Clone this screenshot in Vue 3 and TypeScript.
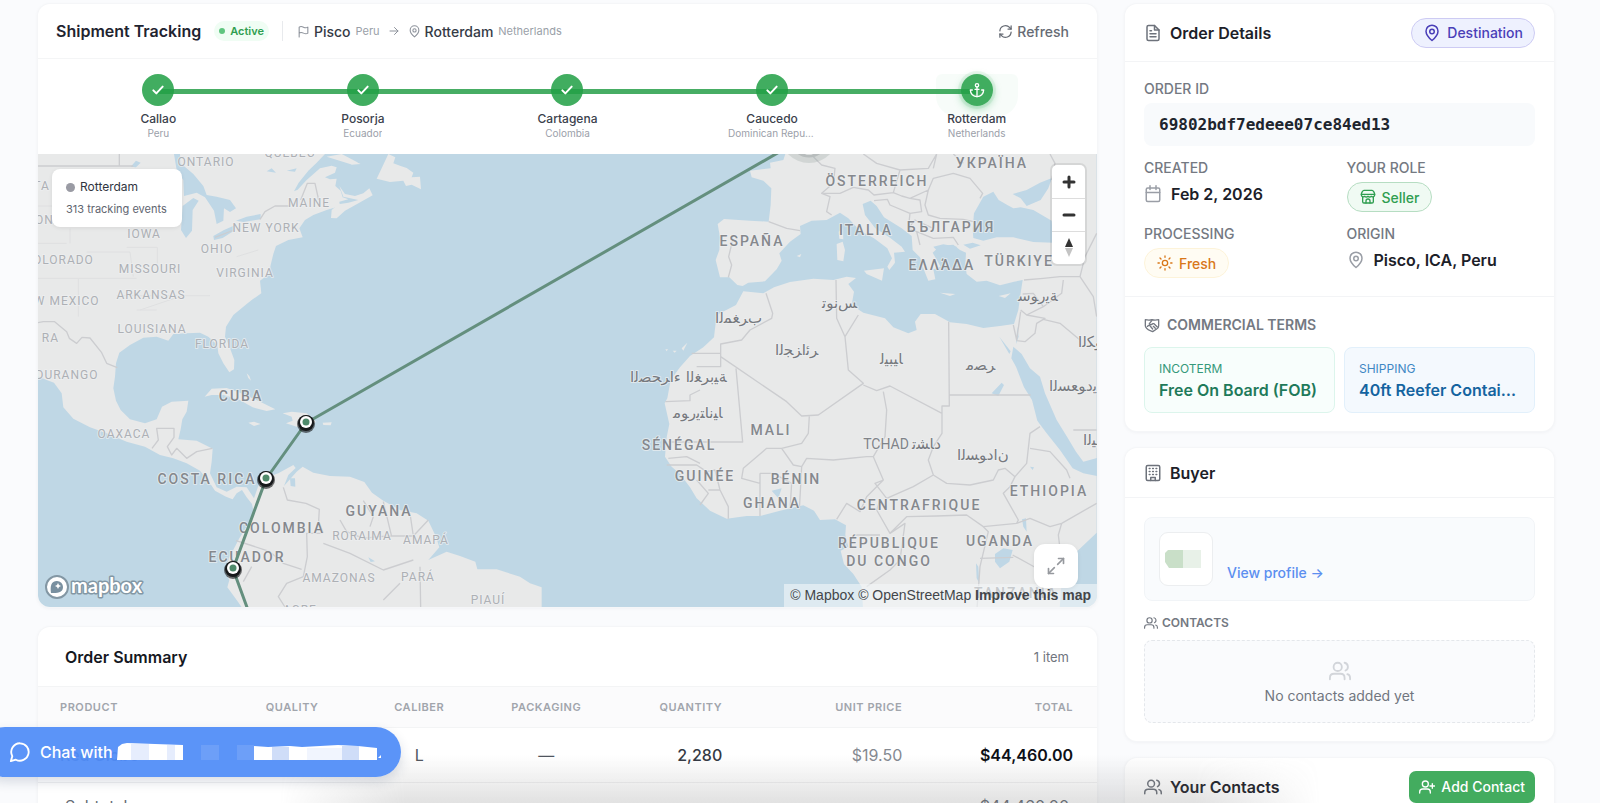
<script setup lang="ts">
import { h, type FunctionalComponent } from 'vue'

const icons: Record<string, string[]> = {
  flag: ['M4 22V4c2-1.500 5-1.500 8 0s6 1.500 8 0v11c-2 1.500-5 1.500-8 0s-6-1.500-8 0'],
  pin: ['M12 22s-8-7-8-12.500a8 8 0 0 1 16 0C20 15 12 22 12 22z', 'M15 10a3 3 0 1 1-6 0 3 3 0 0 1 6 0z'],
  arrow: ['M4 12h16', 'M13 5l7 7-7 7'],
  refresh: ['M3 11a9 9 0 0 1 15.500-5.500L21 8', 'M21 3v5h-5', 'M21 13a9 9 0 0 1-15.500 5.500L3 16', 'M3 21v-5h5'],
  check: ['M5 12.500l4.500 4.500L19 7'],
  anchor: ['M14.500 5a2.500 2.500 0 1 1-5 0 2.500 2.500 0 0 1 5 0z', 'M12 7.500V22', 'M5 12H2a10 10 0 0 0 20 0h-3', 'M9 11h6'],
  file: ['M14 2H6a2 2 0 0 0-2 2v16a2 2 0 0 0 2 2h12a2 2 0 0 0 2-2V8z', 'M14 2v6h6', 'M8 9h2', 'M8 13h8', 'M8 17h8'],
  calendar: ['M5 4h14a2 2 0 0 1 2 2v14a2 2 0 0 1-2 2H5a2 2 0 0 1-2-2V6a2 2 0 0 1 2-2z', 'M3 10h18', 'M8 1v5', 'M16 1v5'],
  store: ['M6 2h12c2 0 4 4 4 6H2c0-2 2-6 4-6z', 'M2 8v1a3 3 0 0 0 5 2 3.500 3.500 0 0 0 5 0 3.500 3.500 0 0 0 5 0 3 3 0 0 0 5-2V8', 'M4 12v7a2 2 0 0 0 2 2h12a2 2 0 0 0 2-2v-7', 'M9 21v-3a3 3 0 0 1 6 0v3'],
  sun: ['M16 12a4 4 0 1 1-8 0 4 4 0 0 1 8 0z', 'M12 1.500v2', 'M12 20.500v2', 'M1.500 12h2', 'M20.500 12h2', 'M4.500 4.500L6 6', 'M18 18l1.500 1.500', 'M4.500 19.500L6 18', 'M18 6l1.500-1.500'],
  deal: ['M2 4c4 1 7 1 10 0 3 1 6 1 10 0v9c0 2-1 4-3 5l-6 4c-2-1-7-2-9-5-1-1-2-3-2-4z', 'M12 5l-4 5c1 2 3 2 5 0h2l5 5', 'M5 14l3-2 5 6', 'M14 14l3 3'],
  building: ['M5 2h14a2 2 0 0 1 2 2v16a2 2 0 0 1-2 2H5a2 2 0 0 1-2-2V4a2 2 0 0 1 2-2z', 'M9 22v-4h6v4', 'M7 6h1', 'M11.500 6h1', 'M16 6h1', 'M7 10h1', 'M11.500 10h1', 'M16 10h1', 'M7 14h1', 'M11.500 14h1', 'M16 14h1'],
  users: ['M14 7.500a4.500 4.500 0 1 1-9 0 4.500 4.500 0 0 1 9 0z', 'M1 21v-1.500c0-3 2-4.500 4.500-4.500h7c2.500 0 4.500 1.500 4.500 4.500V21', 'M17 3a4.500 4.500 0 0 1 1 8.500', 'M20 15.500c2 .5 3 2 3 4V21'],
  userPlus: ['M14 7.500a4.500 4.500 0 1 1-9 0 4.500 4.500 0 0 1 9 0z', 'M1 21v-1.500c0-3 2-4.500 4.500-4.500h7c2.500 0 4.500 1.500 4.500 4.500V21', 'M20 7v7', 'M16.500 10.500h7'],
  expand: ['M14 10l7-7', 'M15 3h6v6', 'M10 14l-7 7', 'M3 15v6h6'],
  chat: ['M12 2.500a9.500 9.500 0 1 1-4.500 17.900L2 22l1.600-5.500A9.500 9.500 0 0 1 12 2.500z'],
}

const Icon: FunctionalComponent<{ name: string; size: number; stroke?: number }> = (p) =>
  h(
    'svg',
    {
      width: p.size, height: p.size, viewBox: '0 0 24 24', fill: 'none', stroke: 'currentColor',
      'stroke-width': p.stroke ?? 2, 'stroke-linecap': 'round', 'stroke-linejoin': 'round', 'aria-hidden': 'true',
    },
    (icons[p.name] ?? []).map((d) => h('path', { d })),
  )
Icon.props = ['name', 'size', 'stroke']

interface Stop { port: string; country: string; current?: boolean }
const stops: Stop[] = [
  { port: 'Callao', country: 'Peru' },
  { port: 'Posorja', country: 'Ecuador' },
  { port: 'Cartagena', country: 'Colombia' },
  { port: 'Caucedo', country: 'Dominican Republic' },
  { port: 'Rotterdam', country: 'Netherlands', current: true },
]

interface Label { t: string; x: number; y: number }
const regions: Label[] = [
  { t: 'ONTARIO', x: 206, y: 166 }, { t: 'QUEBEC', x: 290, y: 157 }, { t: 'MAINE', x: 309, y: 207 },
  { t: 'NEW YORK', x: 266, y: 232 }, { t: 'IOWA', x: 144, y: 238 }, { t: 'OHIO', x: 217, y: 253 },
  { t: 'MISSOURI', x: 150, y: 273 }, { t: 'VIRGINIA', x: 245, y: 277 }, { t: 'ARKANSAS', x: 151, y: 299 },
  { t: 'LOUISIANA', x: 152, y: 333 }, { t: 'FLORIDA', x: 222, y: 348 }, { t: 'COLORADO', x: 59, y: 264 },
  { t: 'NEW MEXICO', x: 58, y: 305 }, { t: 'DAKOTA', x: 24, y: 190 }, { t: 'OREGON', x: 27, y: 224 },
  { t: 'CHIHUAHUA RA', x: 10, y: 342 }, { t: 'DURANGO', x: 67, y: 379 }, { t: 'OAXACA', x: 124, y: 438 },
  { t: 'RORAIMA', x: 362, y: 540 }, { t: 'AMAPÁ', x: 426, y: 544 }, { t: 'AMAZONAS', x: 339, y: 582 },
  { t: 'PARÁ', x: 418, y: 581 }, { t: 'PIAUÍ', x: 488, y: 604 }, { t: 'ACRE', x: 300, y: 614 },
]
const countries: Label[] = [
  { t: 'CUBA', x: 241, y: 401 }, { t: 'COSTA RICA', x: 207, y: 484 }, { t: 'GUYANA', x: 379, y: 516 },
  { t: 'COLOMBIA', x: 282, y: 533 }, { t: 'ECUADOR', x: 247, y: 562 }, { t: 'УКРАЇНА', x: 992, y: 168 },
  { t: 'ÖSTERREICH', x: 877, y: 186 }, { t: 'ESPAÑA', x: 752, y: 246 }, { t: 'ITALIA', x: 866, y: 235 },
  { t: 'БЪЛГАРИЯ', x: 951, y: 232 }, { t: 'ΕΛΛΆΔΑ', x: 942, y: 270 }, { t: 'TÜRKIYE', x: 1019, y: 266 },
  { t: 'MALI', x: 771, y: 435 }, { t: 'SÉNÉGAL', x: 679, y: 450 }, { t: 'GUINÉE', x: 705, y: 481 },
  { t: 'BÉNIN', x: 796, y: 484 }, { t: 'GHANA', x: 772, y: 508 }, { t: 'CENTRAFRIQUE', x: 919, y: 510 },
  { t: 'ETHIOPIA', x: 1049, y: 496 }, { t: 'RÉPUBLIQUE', x: 889, y: 548 }, { t: 'DU CONGO', x: 889, y: 566 },
  { t: 'UGANDA', x: 1000, y: 546 }, { t: 'TANZANIA', x: 1016, y: 598 },
]
// Tile labels are laid out left to right from pre-shaped glyphs.
const arabic: Label[] = [
  { t: 'ﺗﻮﻧﺲ', x: 822, y: 308 }, { t: 'ﺳﻮﺭﻳﺔ', x: 1018, y: 301 }, { t: 'ﺍﻟﻤﻐﺮﺏ', x: 715, y: 323 },
  { t: 'ﺍﻟﺠﺰﺍﺋﺮ', x: 775, y: 355 }, { t: 'ﻟﻴﺒﻴﺎ', x: 880, y: 364 }, { t: 'ﻣﺼﺮ', x: 966, y: 370 },
  { t: 'ﺍﻟﺼﺤﺮﺍﺀ ﺍﻟﻐﺮﺑﻴﺔ', x: 630, y: 382 }, { t: 'ﻣﻮﺭﻳﺘﺎﻧﻴﺎ', x: 673, y: 418 }, { t: 'ﺍﻟﺴﻮﺩﺍﻥ', x: 957, y: 460 },
  { t: 'ﺍﻟﺴﻌﻮﺩﻳﺔ', x: 1049, y: 391 }, { t: 'ﺍﻟﻜﻮﻳﺖ', x: 1078, y: 347 }, { t: 'ﺍﻟﻴﻤﻦ', x: 1083, y: 445 },
  { t: 'ﺗﺸﺎﺩ', x: 912, y: 449 },
]
const pins = [{ x: 306, y: 423 }, { x: 266, y: 479 }, { x: 233, y: 569 }]
</script>

<template>
  <div class="page">
    <main class="layout">
      <div class="col main-col">
        <section class="card tracking">
          <header class="track-head">
            <h2>Shipment Tracking</h2>
            <span class="active"><i></i>Active</span>
            <span class="sep"></span>
            <div class="route">
              <Icon name="flag" :size="13" :stroke="2" /><b>Pisco</b><small>Peru</small>
              <Icon class="to" name="arrow" :size="12" :stroke="2" />
              <Icon name="pin" :size="13" :stroke="2" /><b>Rotterdam</b><small>Netherlands</small>
            </div>
            <button class="refresh" type="button"><Icon name="refresh" :size="15" />Refresh</button>
          </header>
          <ol class="steps">
            <li v-for="s in stops" :key="s.port" :class="{ current: s.current }">
              <span class="dot"><Icon :name="s.current ? 'anchor' : 'check'" :size="16" :stroke="s.current ? 2 : 3" /></span>
              <b>{{ s.port }}</b>
              <small>{{ s.country }}</small>
            </li>
          </ol>
          <div class="map">
            <svg class="canvas" viewBox="38 154 1059 453" preserveAspectRatio="xMidYMid slice" role="img" aria-label="Route map">
              <g transform="translate(30 150) scale(.33333)">
                <g class="land">
                  <path d="M0 0H905L885 12 860 38 835 62 806 98 792 124 803 119 830 90 870 55 905 47 920 52 915 68 885 82 900 88 920 86 916 108 932 122 938 142 955 148 928 155 930 168 890 180 850 195 825 210 808 235 818 262 775 270 738 288 730 312 722 345 717 372 690 392 694 430 668 448 650 462 610 495 588 530 585 560 600 595 613 630 612 658 598 667 580 640 565 610 562 585 535 560 510 548 470 550 430 552 415 572 380 560 340 563 300 585 268 608 258 640 255 680 250 715 258 752 272 780 300 808 345 820 380 808 396 770 425 755 475 752 470 785 457 808 452 838 445 868 500 872 548 896 545 935 540 970 560 1012 590 1025 620 1010 650 1012 672 1045 684 1010 702 985 745 970 790 945 797 954 775 975 762 1008 778 990 800 965 818 950 850 968 900 978 960 980 1003 996 1026 1028 1060 1052 1110 1080 1160 1090 1195 1112 1218 1160 1228 1192 1195 1230 1250 1205 1290 1218 1336 1235 1342 1258 1400 1258 1470 1280 1500 1300 1535 1312V1390H648L620 1350 592 1312 598 1290 585 1262 598 1222 614 1192 628 1165 650 1130 672 1090 666 1062 650 1042 636 1020 620 1030 608 1048 588 1040 555 1022 540 1000 510 962 470 940 430 925 390 915 345 890 290 875 230 850 180 832 130 806 100 772 95 730 72 698 50 690 0 670z" />
                  <path d="M1075 12L1096 22 1090 40 1112 48 1130 54 1150 68 1145 82 1170 80 1173 118 1145 104 1128 108 1120 92 1080 96 1040 86 1055 55zM925 22L960 28 992 42 965 44zM890 20L935 12 985 38 960 42zM928 108L945 132 975 138 1000 130 1018 115 1028 136 988 158 945 182 920 205 903 204 905 180 925 163 955 158 985 150 940 140z" />
                  <path d="M524 740L545 716 590 714 630 728 680 750 736 778 710 783 668 772 625 748 580 735 545 735zM758 790L785 785 830 790 858 815 845 826 800 830 768 820 788 812 785 800zM655 818L672 815 692 822 672 828zM878 818L905 817 902 826 880 825zM650 670L655 684 663 692 658 678z" />
                </g>
                <g class="water">
                  <path d="M432 12H450L452 40 490 72 520 108 530 135 560 140 600 150 618 175 600 186 582 175 580 212 560 222 552 182 525 142 500 128 462 138 460 90 440 60zM458 168L490 144 506 152 488 180 486 242 468 264 453 240zM550 258L582 240 618 224 612 242 578 264 552 270zM618 212L650 200 692 192 692 208 640 216zM710 64L725 55 738 68zM770 62L800 55 795 65zM302 50L318 32 332 38 318 52z" />
                  <path d="M780 985L795 985 796 1010 782 1008zM1015 1222L1035 1234 1022 1236z" />
                </g>
                <g class="lines">
                  <path d="M24 48H310M24 518L40 515H74L110 545 118 565 140 580 156 562 180 564 215 608 230 640 262 653M555 262L612 240M690 208L705 185 735 168H780M812 150L832 100 855 100 866 150M268 12V48" />
                  <path class="faint" d="M24 385H320M120 236V280M24 168H66M145 385V500M170 306H300L310 380M290 292H382V340M330 480L460 436M260 437H540M320 480H380M620 320L685 300M24 280H110" />
                  <path d="M366 895L385 870 380 835H432V862L412 890 425 915 440 895 470 925 500 905 547 895M760 1012L772 1050 828 1060 868 1078 866 1112 880 1150M880 1150H830L832 1220 820 1280 770 1300 745 1340 765 1371M618 1172L660 1185 720 1205 760 1240 815 1258M640 1295L665 1250M930 1110L950 1145 1000 1165 1045 1160 1085 1158H1150L1195 1110M1000 1052L1030 1100 1020 1130M1060 1055L1085 1160M1140 1090L1150 1158M880 1180L960 1210 1060 1260 1150 1230M1170 1250L1172 1371M1060 1350L1110 1300" />
                </g>
                <g transform="translate(1710 0)">
                  <g class="land">
                    <path d="M560 0L550 30 510 38 512 55 450 62 455 82 490 92 514 115 512 165 506 215 450 212 372 207 353 222 360 262 358 300 347 330 360 382 388 382 412 405 428 408 445 398 495 394 530 358 545 332 538 310 570 275 602 252 600 228 635 212 680 210 720 188 745 205 780 242 822 265 862 295 876 325 862 350 868 360 885 338 882 308 915 305 905 290 868 262 826 235 795 195 788 162 812 152 830 168 852 202 905 235 935 258 938 300 960 322 970 355 985 392 1006 388 1000 358 1022 350 998 308 1020 288 1060 284 1080 300 1098 308 1096 345 1100 372 1130 395 1160 392 1200 406 1242 395 1268 390 1262 430 1255 480 1242 522 1200 528 1150 534 1100 522 1050 517 1005 492 962 492 945 515 950 540 925 550 880 532 855 505 790 488 755 465 762 425 745 402 768 384 740 380 700 390 640 386 570 396 522 412 490 430 430 424 408 465 350 495 342 562 310 592 270 618 240 652 212 690 202 745 194 760 208 822 200 862 195 920 215 950 240 972 270 1012 290 1045 330 1082 380 1106 440 1098 480 1098 540 1082 610 1066 642 1082 660 1110 705 1108 738 1126 736 1155 745 1190 722 1202 732 1242 760 1272 785 1310 790 1390H1378L1388 1250 1430 1205 1490 1148V0z" />
                    <path d="M710 282L728 275 735 300 730 334 712 330zM716 245L728 235 730 268 718 266zM792 362L852 355 846 392 800 372zM590 318L604 312 600 322zM1020 428L1066 432 1050 438zM1196 438L1232 430 1215 444zM196 598L204 598 200 604zM218 602L230 602 224 608zM245 595L262 578 250 602z" />
                  </g>
                  <g class="water">
                    <path d="M1118 236L1122 190 1150 140 1180 125 1196 150 1222 165 1240 175 1262 172 1300 180 1355 212 1360 278 1300 276 1240 262 1190 262 1150 272 1120 264zM1238 132L1280 120 1320 98 1356 84 1345 115 1322 150 1280 168 1262 145zM1090 284L1118 278 1142 286 1110 296zM1000 290L1030 283 1070 290 1072 315 1030 322z" />
                    <path d="M1240 590L1265 612 1290 655 1320 680 1335 730 1370 810 1402 862 1428 905 1450 935 1500 922V980L1450 970 1418 955 1380 900 1340 850 1312 812 1296 750 1272 712 1248 650 1234 625zM1198 560L1232 604 1228 612zM1252 530L1256 560 1248 582z" />
                    <path d="M1185 1212L1210 1195 1238 1200 1228 1235 1200 1255 1185 1235zM1266 1108L1278 1105 1280 1145 1270 1130zM1175 730L1205 698 1212 705 1195 738zM1128 1240L1135 1250 1138 1300 1130 1285zM1290 950L1302 952 1298 960zM515 1022L545 1015 535 1045z" />
                  </g>
                  <g class="lines">
                    <path d="M506 215L560 235 600 242M398 270L386 320 395 345 385 382M640 20L665 45 705 55 700 100 665 130 690 140 680 185 695 195M670 130L720 130 760 112 805 120 822 135 880 128 900 60 830 40 790 12M900 60L985 55 1010 12M880 128L905 138 930 145 985 120 1000 85 1060 70 1110 85 1148 130 1140 145M985 120L975 165 985 195 1020 205 1090 208 1120 215M930 145L960 150 965 185 930 190 870 165 862 148 822 152M930 190L925 235 950 245 960 285M950 245L1000 265 1060 262 1075 285M925 235L945 210 1000 235M1010 12L1000 55M1060 12L1090 40M1350 12L1365 40 1355 90" />
                    <path d="M1272 390L1330 385 1380 380 1440 380 1455 320 1490 250M1440 380L1480 440 1490 500M1268 432L1300 430 1330 470 1280 495 1262 480M1330 470L1385 430 1390 390M1330 508L1380 520 1440 570M1280 495L1335 505 1310 520 1305 550 1275 575 1250 572M1240 525L1250 570 1262 485" />
                    <path d="M498 430L518 490 515 505 450 540 425 570 362 582V650H290M275 610H360M362 620L560 755 605 798 655 795 790 700 745 660 735 560 710 505 708 390M735 560L775 495M790 705L830 722 870 708 1026 790V768H1048L1046 515M1048 735H1292M408 655L428 876H205M196 755L270 752V735L300 720M628 798L625 850 605 880 545 895 500 895 430 955 425 985 480 1000M1026 790V850L1000 890 985 930 1000 975 940 1010 860 1045 825 1000 850 990 820 920 855 860 860 780 850 725M545 895L580 945 605 950 620 925 700 930 800 920 820 920M605 950L598 1080M480 970H520L575 1000 570 1080M480 970V1098M200 945L290 945 320 965 345 960 360 1020 385 1070 385 1106M290 990L325 1030 300 1065M360 1020H325M205 925L260 920 300 940M1320 830L1290 850 1280 940 1245 980 1215 955 1195 960 1180 990 1110 1005 1040 1000 1000 975M1290 895L1350 905 1400 960 1410 985M1245 980L1230 1010 1210 1030 1255 1110 1250 1120 1150 1130 1100 1095 1010 1098 920 1100 870 1150 830 1080 840 1050M850 990L800 1040 780 1085 740 1060 710 1108M870 1150L915 1120 900 1230 870 1260 800 1310M760 1155H840M1250 1120L1290 1105 1350 1130 1385 1120 1490 1060M1385 1120L1375 1155 1380 1195M1150 1130L1165 1145 1140 1250 1130 1390M1238 1215L1320 1260M1420 840H1490M1140 1225L1240 1222" />
                  </g>
                </g>
              </g>
              <g class="txt region"><text v-for="l in regions" :key="l.t" :x="l.x" :y="l.y">{{ l.t }}</text></g>
              <g class="txt country"><text v-for="l in countries" :key="l.t" :x="l.x" :y="l.y">{{ l.t }}</text></g>
              <g class="txt arabic"><text v-for="l in arabic" :key="l.t" :x="l.x" :y="l.y">{{ l.t }}</text></g>
              <g class="txt chad"><text x="886" y="449">TCHAD</text></g>
              <circle cx="809" cy="134" r="29" class="halo" /><circle cx="809" cy="138" r="18" class="ring" />
              <polyline class="path" points="809,135 306,423 266,479 233,569 248,610" />
              <g v-for="p in pins" :key="p.y">
                <circle :cx="p.x" :cy="p.y + 1" r="9" class="pin-glow" />
                <circle :cx="p.x" :cy="p.y" r="8" class="pin-shadow" />
                <circle :cx="p.x" :cy="p.y - 1" r="6" fill="#fff" />
                <circle :cx="p.x" :cy="p.y - 1" r="3.500" fill="#4f8a6b" />
              </g>
              <g class="mapbox">
                <circle cx="57" cy="587" r="11" />
                <path d="M51 593c-1-7 0-12 6-12a6 6 0 0 1 6 6c0 6-6 6-12 6z" class="mark" />
                <path d="M58 583l1 2 2 1-2 1-1 2-1-2-2-1 2-1z" />
                <text x="71" y="593">mapbox</text>
              </g>
            </svg>
            <div class="info">
              <p><i></i>Rotterdam</p>
              <p class="muted">313 tracking events</p>
            </div>
            <div class="controls">
              <button type="button" aria-label="Zoom in"><svg width="14" height="14" viewBox="0 0 14 14"><path d="M7 2v10M2 7h10" /></svg></button>
              <button type="button" aria-label="Zoom out"><svg width="14" height="14" viewBox="0 0 14 14"><path d="M2 7h10" /></svg></button>
              <button type="button" aria-label="Reset bearing"><svg width="12" height="22" viewBox="0 0 12 22"><path class="n" d="M6 1l4 9H2z" /><path class="s" d="M6 20l4-9H2z" /></svg></button>
            </div>
            <button class="expand" type="button" aria-label="Expand map"><Icon name="expand" :size="20" :stroke="2" /></button>
            <div class="attrib"><a href="#">© Mapbox</a> <a href="#">© OpenStreetMap</a> <a class="improve" href="#">Improve this map</a></div>
          </div>
        </section>

        <section class="card summary">
          <header class="sum-head"><h2>Order Summary</h2><span>1 item</span></header>
          <table>
            <thead>
              <tr>
                <th class="c1">Product</th><th class="c2 mid">Quality</th><th class="c3 mid">Caliber</th><th class="c4 mid">Packaging</th>
                <th class="c5 num">Quantity</th><th class="c6 num">Unit price</th><th class="num last">Total</th>
              </tr>
            </thead>
            <tbody>
              <tr>
                <td class="prod">Red Globe</td><td></td><td class="mid">L</td><td class="mid">—</td>
                <td class="num qty">2,280</td><td class="num price">$19.50</td><td class="num last total">$44,460.00</td>
              </tr>
            </tbody>
          </table>
          <div class="subtotal"><span>Subtotal</span><span>$44,460.00</span></div>
        </section>
      </div>

      <aside class="col side-col">
        <section class="card">
          <header class="side-head tall">
            <Icon name="file" :size="18" /><h2>Order Details</h2>
            <button class="dest" type="button"><Icon name="pin" :size="18" />Destination</button>
          </header>
          <div class="details">
            <p class="label">ORDER ID</p>
            <p class="oid">69802bdf7edeee07ce84ed13</p>
            <div class="facts">
              <div><p class="label">CREATED</p><p class="value"><Icon name="calendar" :size="18" :stroke="2" />Feb 2, 2026</p></div>
              <div><p class="label">YOUR ROLE</p><span class="pill seller"><Icon name="store" :size="16" />Seller</span></div>
              <div><p class="label">PROCESSING</p><span class="pill fresh"><Icon name="sun" :size="16" />Fresh</span></div>
              <div><p class="label">ORIGIN</p><p class="value"><Icon name="pin" :size="18" :stroke="2" />Pisco, ICA, Peru</p></div>
            </div>
          </div>
          <div class="terms">
            <p class="label strong"><Icon name="deal" :size="16" />COMMERCIAL TERMS</p>
            <div class="boxes">
              <div class="box green"><small>INCOTERM</small><b>Free On Board (FOB)</b></div>
              <div class="box blue"><small>SHIPPING</small><b>40ft Reefer Container</b></div>
            </div>
          </div>
        </section>

        <section class="card">
          <header class="side-head"><Icon name="building" :size="18" /><h2>Buyer</h2></header>
          <div class="buyer">
            <div class="profile">
              <div class="logo">
                <svg width="36" height="18" viewBox="0 0 36 18" aria-hidden="true"><path d="M0 3L3 0H18V18H4L0 12z" fill="#c9dfc8" /><path d="M18 0H36V18H18z" fill="#e8f1e8" /></svg>
              </div>
              <a href="#">View profile →</a>
            </div>
            <p class="label small"><Icon name="users" :size="14" />CONTACTS</p>
            <div class="empty"><Icon name="users" :size="22" /><p>No contacts added yet</p></div>
          </div>
        </section>

        <section class="card">
          <header class="side-head contacts">
            <Icon name="users" :size="18" /><h2>Your Contacts</h2>
            <button class="add" type="button"><Icon name="userPlus" :size="16" />Add Contact</button>
          </header>
        </section>
      </aside>
    </main>
    <div class="shade"></div>
    <button class="chat" type="button">
      <Icon name="chat" :size="22" />
      <span>Chat with</span>
      <svg width="266" height="18" viewBox="0 0 266 18" aria-hidden="true">
        <path d="M0 17L1 4 5 1 10 0 66 2V17z" fill="#fff" /><path d="M14 1h18v16H14zM50 2h8v15h-8z" fill="#e6edfd" />
        <path d="M84 2h18v15H84zM120 2h17v15h-17z" fill="#6d9ff8" /><path d="M137 3l14 1 22-1 12 1 36-2 20 1 19 2v12H137z" fill="#fff" />
        <path d="M155 4h17v13h-17zM225 3h17v14h-17z" fill="#cfddf8" /><path d="M190 5h35v12h-35z" fill="#f1f5fe" /><path d="M261 15l3-3v3z" fill="#fff" />
      </svg>
    </button>
  </div>
</template>

<style>
body { margin: 0; }
</style>

<style scoped>
* { box-sizing: border-box; }
p, h2, ol { margin: 0; padding: 0; }
button { font: inherit; border: 0; background: none; padding: 0; cursor: pointer; }
a { color: inherit; text-decoration: none; }
svg { flex: none; }
.page { position: relative; height: 100vh; overflow: hidden; background: #fafbfd; font-family: Inter, "Liberation Sans", sans-serif; color: #1f2430; }
.layout { display: grid; grid-template-columns: minmax(0, 1fr) 429px; gap: 28px; padding: 4px 46px 0 38px; }
.col { display: flex; flex-direction: column; min-width: 0; }
.main-col { gap: 20px; }
.side-col { gap: 17px; }
.card { background: #fff; border-radius: 12px; box-shadow: 0 0 0 1px #f5f6f8, 0 1px 4px rgba(20, 30, 50, .06); overflow: hidden; }
h2 { font-size: 16px; font-weight: 600; line-height: 24px; }

.track-head { display: flex; align-items: center; height: 55px; padding: 0 28px 0 18px; border-bottom: 1px solid #f4f5f6; }
.active { display: flex; align-items: center; gap: 5px; margin-left: 13px; padding: 0 5px; height: 20px; border-radius: 10px; background: #f0fdf4; color: #2f9e50; font-size: 11px; font-weight: 600; }
.active i { width: 6px; height: 6px; border-radius: 50%; background: #5fc57f; }
.sep { width: 1px; height: 20px; margin: 0 14px 0 13px; background: #e8eaed; }
.route { display: flex; align-items: center; color: #8d929b; }
.route b { margin: 0 5px 0 4px; font-size: 14px; font-weight: 500; color: #353b46; }
.route small { font-size: 11px; color: #9a9fa8; }
.route .to { margin: 0 8px; }
.refresh { display: flex; align-items: center; gap: 4px; margin-left: auto; color: #666b74; font-size: 14px; font-weight: 500; }

.steps { display: flex; list-style: none; height: 95px; padding: 15px 18px 0; }
.steps li { position: relative; flex: 1; display: flex; flex-direction: column; align-items: center; min-width: 0; }
.steps li + li::before { content: ""; position: absolute; top: 15px; left: -50%; width: 100%; height: 5px; background: #47ad64; }
.dot { position: relative; z-index: 1; display: grid; place-items: center; width: 32px; height: 32px; border-radius: 50%; background: rgba(34, 160, 70, .86); color: #fff; }
.current .dot { box-shadow: 0 3px 8px rgba(34, 170, 80, .4), 0 0 0 3px rgba(34, 170, 80, .08); }
.current::after { content: ""; position: absolute; top: 0; width: 82px; height: 42px; border-radius: 6px 6px 20px 20px; background: rgba(60, 190, 100, .04); }
.steps b { margin-top: 5px; font-size: 12px; font-weight: 500; line-height: 16px; color: #3b414c; }
.steps small { max-width: 88px; overflow: hidden; text-overflow: ellipsis; white-space: nowrap; font-size: 10px; line-height: 13px; color: #9ba0a9; }

.map { position: relative; height: 453px; background: #bfd7e5; }
.canvas { display: block; width: 100%; height: 100%; }
.land path { fill: #e8e9e9; }
.water path { fill: #bfd7e6; }
.lines path { fill: none; stroke: #cccdd0; stroke-width: 4; stroke-linejoin: round; }
.lines .faint { stroke: #dfe0e1; stroke-width: 3; }
.txt { font-family: Roboto, "Noto Sans", sans-serif; text-anchor: middle; paint-order: stroke; stroke: rgba(238, 240, 241, .7); stroke-width: 2px; stroke-linejoin: round; }
.region { font-size: 12px; letter-spacing: 1px; fill: #adb0b5; }
.country { font-size: 14px; font-weight: 500; letter-spacing: 2px; fill: #85888d; }
.chad { font-size: 14px; fill: #808388; }
.arabic { text-anchor: start; font-family: "DejaVu Sans", sans-serif; font-size: 15px; fill: #76797e; }
.arabic text { direction: ltr; unicode-bidi: bidi-override; }
.halo { fill: rgba(140, 155, 150, .25); }
.ring { fill: #fff; stroke: #b8bdbd; stroke-width: 3; }
.path { fill: none; stroke: #648f7e; stroke-width: 3; stroke-linejoin: round; }
.pin-shadow { fill: #17191b; }
.pin-glow { fill: rgba(20, 22, 24, .6); }
.mapbox { fill: #fff; stroke: none; }
.mapbox circle { stroke: #8397a4; stroke-width: 2; }
.mapbox .mark { fill: #7990a0; }
.mapbox text { font: 700 20px Lato, sans-serif; paint-order: stroke; stroke: #8397a4; stroke-width: 3px; stroke-linejoin: round; }

.info { position: absolute; top: 15px; left: 14px; display: flex; flex-direction: column; gap: 6px; padding: 10px 15px 10px 14px; border-radius: 8px; background: #fff; box-shadow: 0 1px 4px rgba(0, 0, 0, .08); font-size: 12px; line-height: 16px; color: #30353f; }
.info p { display: flex; align-items: center; gap: 5px; }
.info i { width: 9px; height: 9px; border-radius: 50%; background: #9a9ba4; }
.info .muted { font-size: 11px; color: #60656f; }
.controls { position: absolute; top: 11px; right: 12px; width: 33px; border-radius: 5px; background: #fff; box-shadow: 0 0 0 2px rgba(0, 0, 0, .08); }
.controls button { display: grid; place-items: center; width: 100%; height: 33px; }
.controls button + button { border-top: 1px solid #ddd; }
.controls path { stroke: #333; stroke-width: 3; stroke-linecap: round; fill: none; }
.controls .n { fill: #333; stroke: none; }
.controls .s { fill: #c4c4c4; stroke: none; }
.expand { position: absolute; right: 19px; bottom: 19px; z-index: 1; display: grid; place-items: center; width: 44px; height: 44px; border-radius: 11px; background: #fff; color: #96999e; box-shadow: 0 1px 4px rgba(0, 0, 0, .08); }
.attrib { position: absolute; right: 0; bottom: 0; padding: 0 6px; background: rgba(244, 247, 249, .6); font: 14px/23px "Liberation Sans", sans-serif; color: #43464a; }
.improve { font-weight: 700; }

.sum-head { display: flex; align-items: center; justify-content: space-between; height: 59px; padding: 0 28px 0 27px; color: #15181f; }
.sum-head span { font-size: 13px; color: #70757e; }
table { width: 100%; table-layout: fixed; border-collapse: collapse; }
th, td { padding: 0; font-size: 16px; text-align: left; }
th { height: 41px; background: #fbfbfc; border-top: 1px solid #f3f4f5; border-bottom: 1px solid #f3f4f5; font-size: 11px; font-weight: 600; letter-spacing: .05em; text-transform: uppercase; color: #a1a5ac; }
td { height: 55px; color: #50555e; border-bottom: 1px solid #f0f1f2; }
th.c1, .prod { padding-left: 22px; }
.c1 { width: 18%; } .c2 { width: 12%; } .c3 { width: 12%; } .c4 { width: 12%; } .c5 { width: 12.500%; } .c6 { width: 17%; }
.mid { text-align: center; }
.num { text-align: right; padding-right: 20px; }
.last { padding-right: 24px; }
.prod { color: #16305c; font-weight: 500; }
td.qty { color: #343943; font-weight: 500; }
td.price { color: #858991; }
td.total { color: #0d1016; font-weight: 600; }
.subtotal { display: flex; justify-content: space-between; padding: 11px 28px 20px 27px; font-size: 16px; line-height: 24px; color: #666b74; }

.side-head { display: flex; align-items: center; gap: 8px; height: 50px; padding: 0 19px; border-bottom: 1px solid #f3f4f6; color: #6d727b; }
.side-head.tall { height: 58px; }
.side-head.contacts { height: 58px; }
.side-head h2 { color: #1d2129; }
.dest { display: flex; align-items: center; gap: 6px; height: 30px; margin-left: auto; padding: 0 11px; border: 1px solid #cdcbf3; border-radius: 15px; background: #eef1fe; color: #4a3fb8; font-size: 14px; font-weight: 500; }
.add { display: flex; align-items: center; gap: 6px; height: 32px; margin-left: auto; padding: 0 10px; border-radius: 7px; background: #43ac5f; color: #fff; font-size: 14px; font-weight: 500; }
.details { padding: 17px 19px 18px; border-bottom: 1px solid #f3f4f6; }
.label { display: flex; align-items: center; gap: 7px; font-size: 14px; font-weight: 500; line-height: 20px; color: #747982; }
.oid { margin-top: 4px; padding: 0 15px; border-radius: 8px; background: #f8fafc; font: 700 16px/43px "DejaVu Sans Mono", monospace; color: #20252e; }
.facts { display: grid; grid-template-columns: 1fr 1fr; gap: 12px 14px; margin-top: 12px; }
.value { display: flex; align-items: center; gap: 9px; margin-top: 4px; font-size: 16px; font-weight: 600; line-height: 24px; color: #1c2028; }
.value svg { color: #9a9ea6; }
.pill { display: inline-flex; align-items: center; gap: 6px; height: 30px; margin-top: 4px; padding: 0 12px; border: 1px solid; border-radius: 15px; font-size: 14px; font-weight: 500; }
.seller { border-color: #b6ddc2; background: #f0faf3; color: #2f9e50; }
.fresh { border-color: #fdf3d9; background: #fffcf3; color: #d9771a; }
.terms { padding: 18px 19px; }
.strong { font-weight: 600; }
.boxes { display: grid; grid-template-columns: 1fr 1fr; gap: 9px; margin-top: 12px; }
.box { min-width: 0; height: 66px; padding: 12px 14px 10px; border: 1px solid; border-radius: 8px; }
.box small, .box b { display: block; overflow: hidden; text-overflow: ellipsis; white-space: nowrap; }
.box small { font-size: 12px; line-height: 18px; }
.box b { font-size: 16px; font-weight: 600; line-height: 25px; }
.green { border-color: #dcf5ec; background: #f8fefc; color: #1f7a5a; }
.green small { color: #35997a; }
.blue { border-color: #e2f0fb; background: #f4f9fe; color: #1464a0; }
.blue small { color: #3f88c4; }
.buyer { padding: 19px 19px 18px; }
.profile { display: flex; align-items: center; gap: 14px; height: 84px; padding: 0 14px; border: 1px solid #f1f4f7; border-radius: 8px; background: #f9fbfd; }
.profile a { padding-top: 26px; color: #5c8ff0; font-size: 14px; font-weight: 500; }
.logo { display: grid; align-items: center; padding-left: 5px; width: 54px; height: 54px; border: 1px solid #eceef0; border-radius: 9px; background: #fff; }
.small { gap: 4px; margin-top: 12px; font-size: 12px; font-weight: 600; }
.empty { display: flex; flex-direction: column; align-items: center; gap: 4px; margin-top: 7px; padding: 19px 0 16px; border: 1px dashed #e4e7eb; border-radius: 8px; background: #fafbfd; color: #d2d5da; font-size: 14px; line-height: 20px; }
.empty p { color: #71767f; }

.shade { position: absolute; right: 280px; bottom: 0; left: 280px; height: 48px; background: linear-gradient(to bottom, rgba(120, 120, 120, 0), rgba(120, 120, 120, .22)); mask-image: linear-gradient(to right, transparent, #000 12%, #000 88%, transparent); pointer-events: none; }
.chat { position: absolute; bottom: 26px; left: -20px; display: flex; align-items: center; gap: 9px; height: 50px; padding: 0 18px 0 29px; border-radius: 25px; background: rgba(82, 142, 248, .95); color: #fff; font-size: 16px; font-weight: 500; box-shadow: 0 5px 12px rgba(30, 50, 90, .16); }
.chat svg + span { margin-right: -5px; }
</style>
